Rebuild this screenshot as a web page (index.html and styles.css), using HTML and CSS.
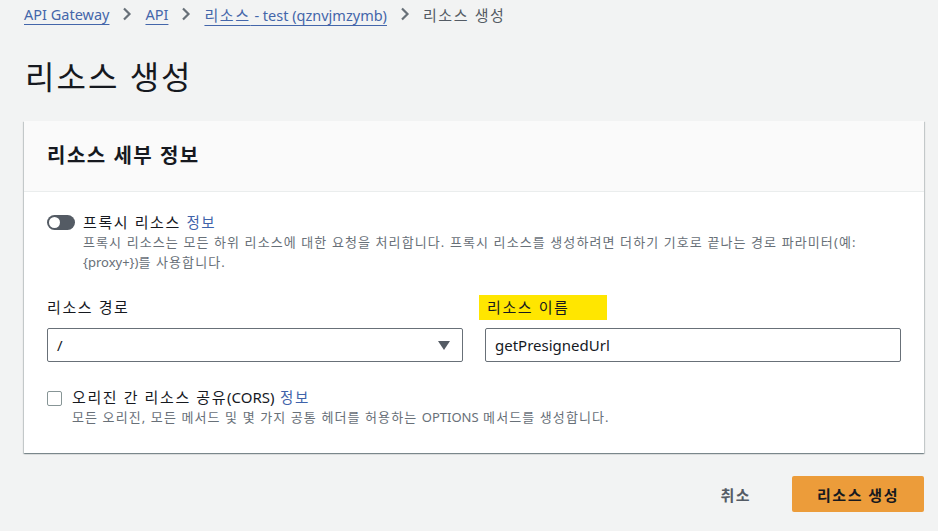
FILE: index.html
```html
<!doctype html>
<html lang="ko">
<head>
    <meta charset="utf-8">
    <title>리소스 생성</title>
    <link rel="stylesheet" href="styles.css">
</head>
<body>
    <div id="page">
        <nav class="breadcrumbs">
            <a href="#" class="en">API Gateway</a>
            <span class="sep"><svg width="10" height="14" viewBox="0 0 10 14"><path d="M2 1.5 L7.5 7 L2 12.5" fill="none" stroke="#687078" stroke-width="2.2"/></svg></span>
            <a href="#" class="en">API</a>
            <span class="sep"><svg width="10" height="14" viewBox="0 0 10 14"><path d="M2 1.5 L7.5 7 L2 12.5" fill="none" stroke="#687078" stroke-width="2.2"/></svg></span>
            <a href="#">리소스<span class="en"> - test (qznvjmzymb)</span></a>
            <span class="sep"><svg width="10" height="14" viewBox="0 0 10 14"><path d="M2 1.5 L7.5 7 L2 12.5" fill="none" stroke="#687078" stroke-width="2.2"/></svg></span>
            <span class="current">리소스 생성</span>
        </nav>
        <h1>리소스 생성</h1>
        <div class="card">
            <div class="card-header">
                <h2>리소스 세부 정보</h2>
            </div>
            <div class="card-body">
                <div class="option">
                    <span class="toggle"><span class="knob"></span></span>
                    <div class="option-text">
                        <div class="option-label">프록시 리소스 <a href="#" class="info">정보</a></div>
                        <div class="desc">프록시 리소스는 모든 하위 리소스에 대한 요청을 처리합니다. 프록시 리소스를 생성하려면 더하기 기호로 끝나는 경로 파라미터(예: <span class="en">{proxy+})</span>를 사용합니다.</div>
                    </div>
                </div>
                <div class="fields">
                    <div class="field">
                        <label><span class="plain">리소스 경로</span></label>
                        <div class="select">
                            <span class="en">/</span>
                            <svg width="12" height="9" viewBox="0 0 12 9"><path d="M0 0 H12 L6 9 Z" fill="#545b64"/></svg>
                        </div>
                    </div>
                    <div class="field">
                        <label><span class="mark">리소스 이름</span></label>
                        <div class="input en">getPresignedUrl</div>
                    </div>
                </div>
                <div class="option">
                    <span class="checkbox"></span>
                    <div class="option-text">
                        <div class="option-label">오리진 간 리소스 공유<span class="en">(CORS)</span> <a href="#" class="info">정보</a></div>
                        <div class="desc">모든 오리진, 모든 메서드 및 몇 가지 공통 헤더를 허용하는 <span class="en">OPTIONS</span> 메서드를 생성합니다.</div>
                    </div>
                </div>
            </div>
        </div>
        <div class="actions">
            <button type="button" class="link-button">취소</button>
            <button type="button" class="primary">리소스 생성</button>
        </div>
    </div>
</body>
</html>
```

FILE: styles.css
```css
body {
    margin: 0;
    padding: 0;
    background-color: #f2f3f3;
    font-family: "Noto Sans", "Noto Sans CJK KR", sans-serif;
    color: #16191f;
    letter-spacing: 0.1em;
}
.en {
    letter-spacing: 0;
}
#page {
    padding: 2px 14px 0 24px;
}
.breadcrumbs {
    display: flex;
    align-items: center;
    font-size: 15px;
    height: 24px;
}
.breadcrumbs .en {
    font-size: 14.5px;
}
.breadcrumbs a {
    color: #4466aa;
    text-decoration: underline;
    text-underline-offset: 4px;
}
.sep {
    display: flex;
    margin: 0 13px 0 13px;
}
.current {
    color: #545b64;
}
h1 {
    font-size: 32px;
    font-weight: 400;
    margin: 31px 0 24px 1px;
    line-height: 40px;
    letter-spacing: 2px;
}
.card {
    background-color: white;
    box-shadow: 0 1px 1px 0 rgba(0, 28, 36, 0.3), 1px 1px 1px 0 rgba(0, 28, 36, 0.15), -1px 1px 1px 0 rgba(0, 28, 36, 0.15);
}
.card-header {
    background-color: #fafafa;
    border-bottom: 1px solid #eaeded;
    padding: 0 23px;
    height: 70px;
    display: flex;
    align-items: center;
}
h2 {
    font-size: 20px;
    font-weight: 700;
    margin: 0;
    padding-bottom: 3px;
    letter-spacing: 1.5px;
}
.card-body {
    padding: 20px 23px 26px 23px;
}
.option {
    display: flex;
    align-items: flex-start;
}
.option-text {
    flex: 1;
}
.option-label {
    font-size: 15px;
    line-height: 20px;
}
.info {
    color: #3f63aa;
    text-decoration: none;
    font-weight: 400;
    font-size: 14.5px;
}
.desc {
    font-size: 13px;
    color: #687078;
    line-height: 20px;
    letter-spacing: 1.1px;
}
.toggle {
    width: 28px;
    height: 15px;
    border-radius: 8px;
    background-color: #545b64;
    margin: 3px 8px 0 0;
    display: flex;
    align-items: center;
}
.knob {
    width: 11px;
    height: 11px;
    border-radius: 50%;
    background-color: white;
    margin-left: 2px;
}
.checkbox {
    width: 13px;
    height: 13px;
    border: 1px solid #879596;
    border-radius: 2px;
    margin: 4px 10px 0 0;
}
.fields {
    display: flex;
    gap: 22px;
    margin: 23px 0 25px 0;
}
.field {
    flex: 1;
}
label {
    display: block;
    font-size: 15px;
    height: 25px;
    line-height: 25px;
    margin-bottom: 8px;
}
.plain {
    display: inline-block;
}
.mark {
    display: inline-block;
    background-color: #ffe600;
    padding: 0 37px 0 8px;
    margin-left: -6px;
}
.select, .input {
    box-sizing: border-box;
    border: 1px solid #687078;
    border-radius: 2px;
    height: 34px;
    display: flex;
    align-items: center;
    padding: 0 9px;
    font-size: 15px;
}
.select {
    justify-content: space-between;
    padding-right: 12px;
}
.actions {
    display: flex;
    justify-content: flex-end;
    align-items: center;
    margin-top: 23px;
}
button {
    font-family: inherit;
    font-size: 15px;
    font-weight: 700;
    letter-spacing: 0.1em;
    cursor: pointer;
}
.link-button {
    background: none;
    border: none;
    color: #545b64;
    margin-right: 35px;
}
.primary {
    background-color: #ec9c3a;
    border: none;
    border-radius: 2px;
    color: #16191f;
    width: 132px;
    height: 36px;
}
```
